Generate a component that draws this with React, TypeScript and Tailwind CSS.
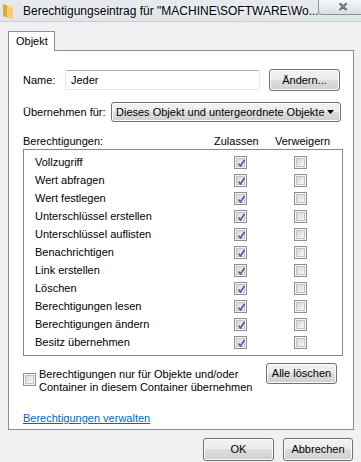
import * as React from "react";

const rows = [
  "Vollzugriff",
  "Wert abfragen",
  "Wert festlegen",
  "Unterschlüssel erstellen",
  "Unterschlüssel auflisten",
  "Benachrichtigen",
  "Link erstellen",
  "Löschen",
  "Berechtigungen lesen",
  "Berechtigungen ändern",
  "Besitz übernehmen",
];

const btn =
  "flex items-center justify-center rounded-[3px] border border-[#707070] bg-[linear-gradient(to_bottom,#f2f2f2_0%,#ebebeb_50%,#dddddd_50%,#cfcfcf_100%)] shadow-[inset_0_0_0_1px_#fcfcfc]";

function Checkbox({ checked = false }: { checked?: boolean }) {
  return (
    <div className="relative h-[13px] w-[13px] border border-[#8f8f8f] bg-[#f4f4f4] p-px">
      <div className="h-full w-full border border-[#c3c3c3] bg-[linear-gradient(135deg,#d8d8d8_0%,#f6f6f6_100%)]" />
      {checked && (
        <svg className="absolute left-[2px] top-[2px]" width="9" height="9" viewBox="0 0 9 9">
          <path d="M1.5 4.5 L3.5 7 L7.5 1" fill="none" stroke="#4a5b8f" strokeWidth="1.6" />
        </svg>
      )}
    </div>
  );
}

function FolderIcon() {
  return (
    <svg width="12" height="16" viewBox="0 0 12 16" className="shrink-0">
      <path d="M0 1 L6 3 L6 15 L0 13 Z" fill="#d9a93a" />
      <path d="M4 2 L10 3.5 L10 16 L4 14.5 Z" fill="#f3cf6b" />
      <path d="M4 2 L10 3.5 L10 5 L4 3.5 Z" fill="#fbe7a6" />
    </svg>
  );
}

export default function App() {
  return (
    <div className="relative h-[462px] w-[361px] overflow-hidden bg-[#f0f0f0] font-['Liberation_Sans',Arial,sans-serif] text-[11px] text-black">
      {/* title bar */}
      <div className="flex h-[22px] items-start border-b border-[#c9cfd6] bg-[linear-gradient(to_bottom,#e6eaee,#dfe4e9)] pl-[3px]">
        <div className="mt-[3px]">
          <FolderIcon />
        </div>
        <span className="ml-[8px] mt-[4px] min-w-0 overflow-hidden whitespace-nowrap text-[12px] leading-[14px] [text-shadow:0_0_6px_#fff]">
          Berechtigungseintrag für "MACHINE\SOFTWARE\Wo...
        </span>
        <div className="ml-auto flex h-[15px] w-[43px] shrink-0 items-center justify-start rounded-bl-[4px] border-b border-l border-[#8d939a] bg-[linear-gradient(to_bottom,#f6f7f9,#d9dee4)] pl-[19px]">
          <span className="font-['DejaVu_Sans',sans-serif] text-[12px] font-bold leading-[12px] text-white [-webkit-text-stroke:1px_#6a7077]">
            ✕
          </span>
        </div>
      </div>

      {/* client */}
      <div className="pl-[8px] pr-[7px]">
        <div className="mt-[9px] flex">
          <div className="relative z-10 -mb-px flex h-[20px] w-[47px] items-center border border-b-0 border-[#898c95] bg-white pl-[7px]">
            Objekt
          </div>
        </div>
        <div className="h-[380px] border border-[#898c95] bg-white pl-[14px]">
          {/* name */}
          <div className="mt-[18px] flex h-[22px] items-center">
            <span className="w-[42px]">Name:</span>
            <div className="flex h-[20px] w-[195px] items-center rounded-[2px] border border-[#e3e9ef] border-t-[#abadb3] pl-[5px]">
              Jeder
            </div>
            <div className={`${btn} ml-[9px] h-[22px] w-[71px]`}>Ändern...</div>
          </div>

          {/* apply to */}
          <div className="mt-[11px] flex h-[20px] items-center">
            <span className="w-[88px]">Übernehmen für:</span>
            <div className={`${btn} h-[20px] w-[230px] !justify-between pl-[4px] pr-[6px]`}>
              <span>Dieses Objekt und untergeordnete Objekte</span>
              <svg width="7" height="4" viewBox="0 0 7 4">
                <path d="M0 0 H7 L3.5 4 Z" fill="#000" />
              </svg>
            </div>
          </div>

          {/* header */}
          <div className="mt-[12px] grid h-[15px] grid-cols-[191px_61px_1fr] items-start leading-[14px]">
            <span>Berechtigungen:</span>
            <span>Zulassen</span>
            <span>Verweigern</span>
          </div>

          {/* list */}
          <div className="h-[207px] w-[320px] border border-[#828790] pl-[11px] pt-[3px]">
            {rows.map((r) => (
              <div key={r} className="grid h-[18px] grid-cols-[199px_60px_1fr] items-center">
                <span>{r}</span>
                <Checkbox checked />
                <Checkbox />
              </div>
            ))}
          </div>

          {/* inherit */}
          <div className="mt-[7px] flex items-start">
            <div className="mt-[10px]">
              <Checkbox />
            </div>
            <div className="ml-[3px] mt-[5px] w-[220px] leading-[13px]">
              Berechtigungen nur für Objekte und/oder Container in diesem Container übernehmen
            </div>
            <div className={`${btn} ml-[7px] h-[21px] w-[71px]`}>Alle löschen</div>
          </div>

          <div className="mt-[17px] leading-[14px]">
            <span className="text-[#0066cc] underline">Berechtigungen verwalten</span>
          </div>
        </div>

        {/* footer */}
        <div className="mt-[8px] flex justify-end gap-[9px] pr-px">
          <div className={`${btn} h-[23px] w-[71px]`}>OK</div>
          <div className={`${btn} h-[23px] w-[70px]`}>Abbrechen</div>
        </div>
      </div>
    </div>
  );
}
